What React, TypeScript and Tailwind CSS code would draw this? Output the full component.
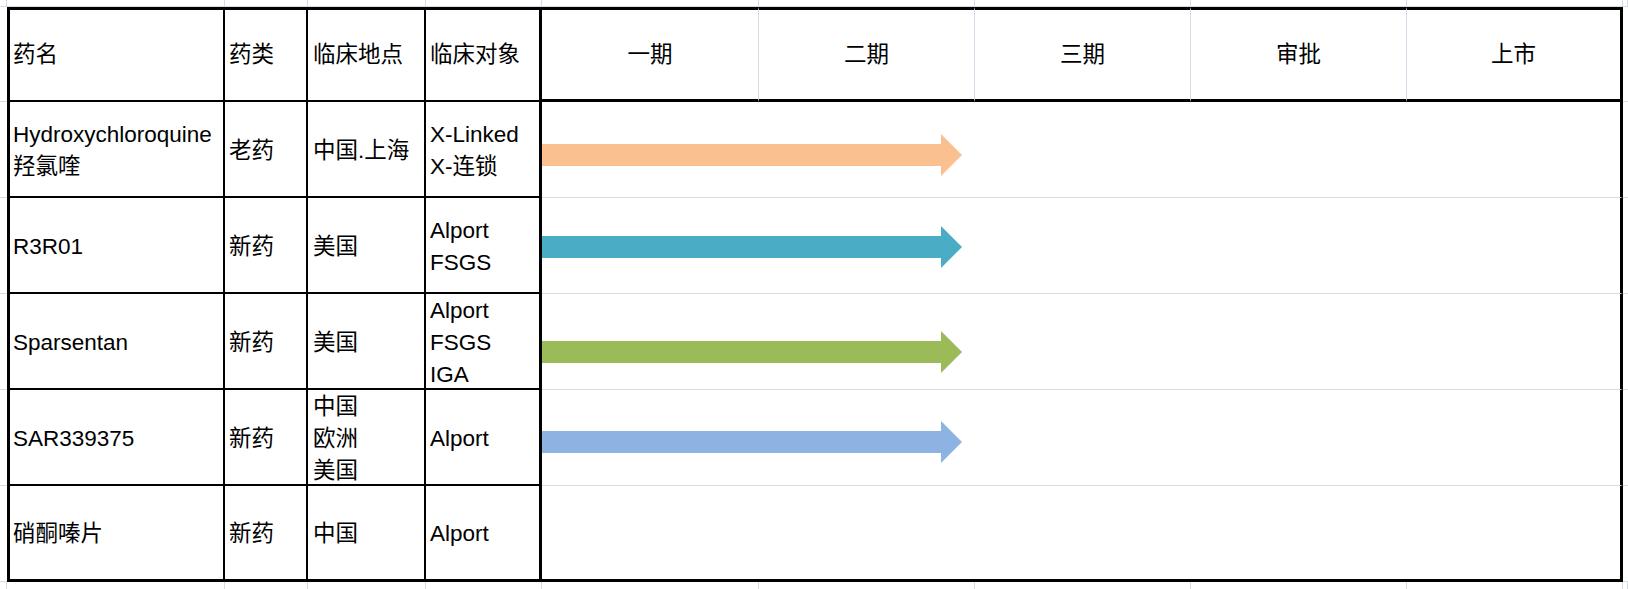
import React from "react";

type Row = {
  name: string[];
  kind: string;
  place: string[];
  target: string[];
  arrow: string | null;
  mt: string;
};

const rows: Row[] = [
  { name: ["Hydroxychloroquine", "羟氯喹"], kind: "老药", place: ["中国.上海"], target: ["X-Linked", "X-连锁"], arrow: "#FAC090", mt: "mt-[32px]" },
  { name: ["R3R01"], kind: "新药", place: ["美国"], target: ["Alport", "FSGS"], arrow: "#4BACC6", mt: "mt-[28px]" },
  { name: ["Sparsentan"], kind: "新药", place: ["美国"], target: ["Alport", "FSGS", "IGA"], arrow: "#9BBB59", mt: "mt-[37px]" },
  { name: ["SAR339375"], kind: "新药", place: ["中国", "欧洲", "美国"], target: ["Alport"], arrow: "#8DB3E2", mt: "mt-[31px]" },
  { name: ["硝酮嗪片"], kind: "新药", place: ["中国"], target: ["Alport"], arrow: null, mt: "mt-[32px]" },
];

const phases = ["一期", "二期", "三期", "审批", "上市"];

function Arrow({ color }: { color: string }) {
  return (
    <svg width="420" height="42" viewBox="0 0 420 42" className="block">
      <polygon points="0,10 399,10 399,0 420,21 399,42 399,32 0,32" fill={color} />
    </svg>
  );
}

function Lines({ lines }: { lines: string[] }) {
  return (
    <div className="flex flex-col pt-[3px]">
      {lines.map((l, i) => (
        <span key={i} className="whitespace-nowrap">
          {l}
        </span>
      ))}
    </div>
  );
}

export default function App() {
  const strip = Array.from({ length: 11 });
  return (
    <div className="w-[1628px] h-[589px] bg-white overflow-hidden text-black text-[22.5px] leading-[32px] font-['Liberation_Sans','Noto_Sans_CJK_SC',sans-serif]">
      <div className="grid grid-cols-[7px_218px_83px_118px_116px_217px_216px_216px_216px_216px_5px] grid-rows-[7px_95px_96px_96px_96px_96px_96px_7px]">
        {/* top strip */}
        {strip.map((_, i) => (
          <div key={"t" + i} className="border-r border-b border-[#d5dbe8]" />
        ))}

        {/* header row */}
        <div className="border-b border-[#d5dbe8]" />
        <div className="border-t-[3px] border-l-[3px] border-r-2 border-b-2 border-black flex items-center pl-[3px]">药名</div>
        <div className="border-t-[3px] border-r-2 border-b-2 border-black flex items-center pl-[4px]">药类</div>
        <div className="border-t-[3px] border-r-2 border-b-2 border-black flex items-center pl-[5px]">临床地点</div>
        <div className="border-t-[3px] border-r-[3px] border-b-2 border-black flex items-center pl-[4px]">临床对象</div>
        {phases.map((p, i) => (
          <div
            key={p}
            className={
              i === phases.length - 1
                ? "border-t-[3px] border-b-[3px] border-r-[3px] border-black flex items-center justify-center"
                : "border-t-[3px] border-b-[3px] border-black border-r border-r-[#d5dbe8] flex items-center justify-center"
            }
          >
            {p}
          </div>
        ))}
        <div className="border-b border-[#d5dbe8]" />

        {/* body rows */}
        {rows.map((r, idx) => {
          const last = idx === rows.length - 1;
          return (
            <React.Fragment key={idx}>
              <div className="border-b border-[#d5dbe8]" />
              <div className={(last ? "border-b-[3px] " : "border-b-2 ") + "border-l-[3px] border-r-2 border-black flex items-center pl-[3px]"}>
                <Lines lines={r.name} />
              </div>
              <div className={(last ? "border-b-[3px] " : "border-b-2 ") + "border-r-2 border-black flex items-center pl-[4px]"}>
                <Lines lines={[r.kind]} />
              </div>
              <div className={(last ? "border-b-[3px] " : "border-b-2 ") + "border-r-2 border-black flex items-center pl-[5px]"}>
                <Lines lines={r.place} />
              </div>
              <div className={(last ? "border-b-[3px] " : "border-b-2 ") + "border-r-[3px] border-black flex items-center pl-[4px]"}>
                <Lines lines={r.target} />
              </div>
              <div
                className={
                  "col-span-5 flex items-start border-r-[3px] border-r-black " +
                  (last ? "border-b-[3px] border-b-black" : "border-b border-b-[#d5dbe8]")
                }
              >
                {r.arrow && (
                  <div className={r.mt}>
                    <Arrow color={r.arrow} />
                  </div>
                )}
              </div>
              <div className="border-b border-[#d5dbe8]" />
            </React.Fragment>
          );
        })}

        {/* bottom strip */}
        {strip.map((_, i) => (
          <div key={"b" + i} className="border-r border-[#d5dbe8]" />
        ))}
      </div>
    </div>
  );
}
